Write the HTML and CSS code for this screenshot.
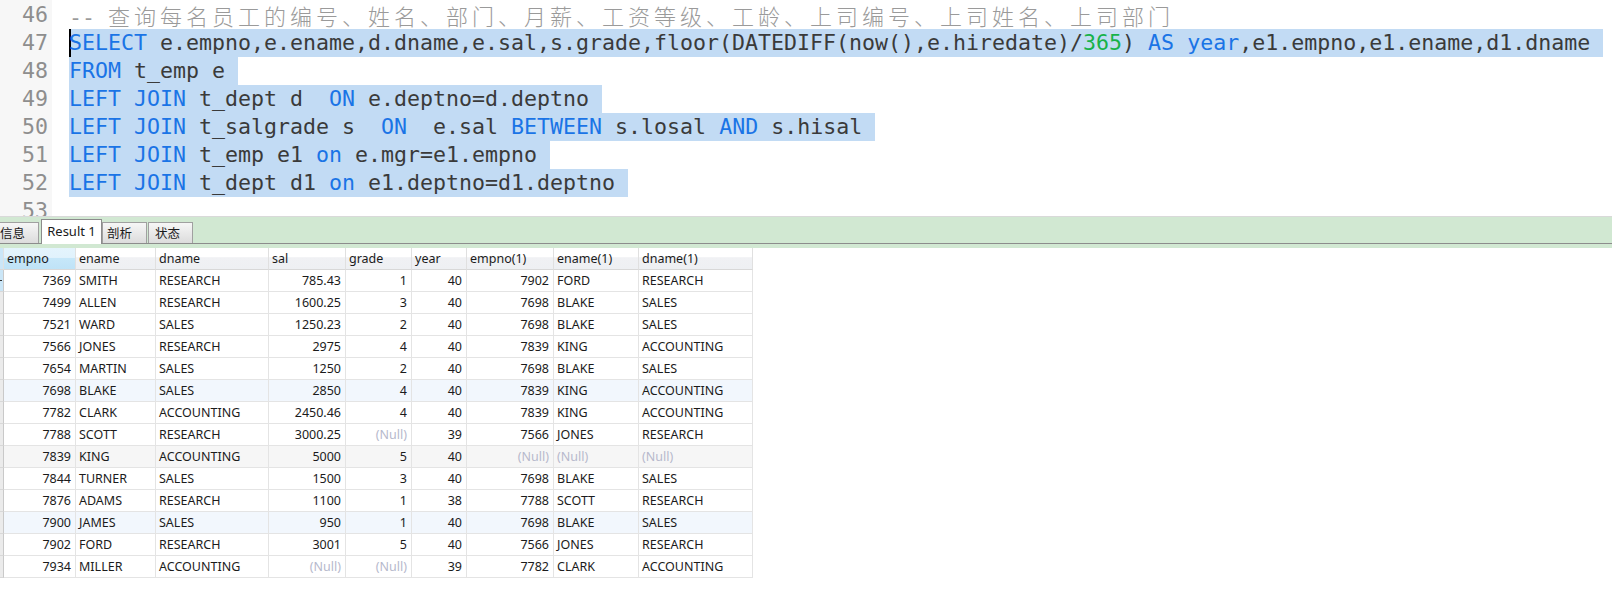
FILE: index.html
```html
<!DOCTYPE html>
<html>
<head>
<meta charset="utf-8">
<link rel="stylesheet" href="styles.css">
</head>
<body>
<div class="editor">
  <div class="gutter">
    <div class="ln">46</div>
    <div class="ln">47</div>
    <div class="ln">48</div>
    <div class="ln">49</div>
    <div class="ln">50</div>
    <div class="ln">51</div>
    <div class="ln">52</div>
    <div class="ln">53</div>
  </div>
  <div class="code">
    <div class="line"><span class="cm">-- <span class="cjk">查询每名员工的编号、姓名、部门、月薪、工资等级、工龄、上司编号、上司姓名、上司部门</span></span></div>
    <div class="line"><span class="sel caret"><span class="kw">SELECT</span> e.empno,e.ename,d.dname,e.sal,s.grade,floor(DATEDIFF(now(),e.hiredate)/<span class="num">365</span>) <span class="kw">AS</span> <span class="kw">year</span>,e1.empno,e1.ename,d1.dname </span></div>
    <div class="line"><span class="sel"><span class="kw">FROM</span> t_emp e </span></div>
    <div class="line"><span class="sel"><span class="kw">LEFT</span> <span class="kw">JOIN</span> t_dept d  <span class="kw">ON</span> e.deptno=d.deptno </span></div>
    <div class="line"><span class="sel"><span class="kw">LEFT</span> <span class="kw">JOIN</span> t_salgrade s  <span class="kw">ON</span>  e.sal <span class="kw">BETWEEN</span> s.losal <span class="kw">AND</span> s.hisal </span></div>
    <div class="line"><span class="sel"><span class="kw">LEFT</span> <span class="kw">JOIN</span> t_emp e1 <span class="kw">on</span> e.mgr=e1.empno </span></div>
    <div class="line"><span class="sel"><span class="kw">LEFT</span> <span class="kw">JOIN</span> t_dept d1 <span class="kw">on</span> e1.deptno=d1.deptno </span></div>
    <div class="line"> </div>
  </div>
</div>

<div class="tabstrip">
  <div class="tabrow">
    <div class="tab first">信息</div>
    <div class="tab active">Result 1</div>
    <div class="tab">剖析</div>
    <div class="tab last">状态</div>
  </div>
</div>

<div class="grid">
  <div class="row head">
    <div class="c ind sel-ind"></div>
    <div class="c hsel">empno</div>
    <div class="c">ename</div>
    <div class="c">dname</div>
    <div class="c">sal</div>
    <div class="c">grade</div>
    <div class="c">year</div>
    <div class="c">empno(1)</div>
    <div class="c">ename(1)</div>
    <div class="c">dname(1)</div>
  </div>
  <div class="row">
    <div class="c ind sel-ind"><span class="tip"></span></div>
    <div class="c r">7369</div><div class="c">SMITH</div><div class="c">RESEARCH</div><div class="c r">785.43</div><div class="c r">1</div><div class="c r">40</div><div class="c r">7902</div><div class="c">FORD</div><div class="c">RESEARCH</div>
  </div>
  <div class="row">
    <div class="c ind"></div>
    <div class="c r">7499</div><div class="c">ALLEN</div><div class="c">RESEARCH</div><div class="c r">1600.25</div><div class="c r">3</div><div class="c r">40</div><div class="c r">7698</div><div class="c">BLAKE</div><div class="c">SALES</div>
  </div>
  <div class="row">
    <div class="c ind"></div>
    <div class="c r">7521</div><div class="c">WARD</div><div class="c">SALES</div><div class="c r">1250.23</div><div class="c r">2</div><div class="c r">40</div><div class="c r">7698</div><div class="c">BLAKE</div><div class="c">SALES</div>
  </div>
  <div class="row">
    <div class="c ind"></div>
    <div class="c r">7566</div><div class="c">JONES</div><div class="c">RESEARCH</div><div class="c r">2975</div><div class="c r">4</div><div class="c r">40</div><div class="c r">7839</div><div class="c">KING</div><div class="c">ACCOUNTING</div>
  </div>
  <div class="row">
    <div class="c ind"></div>
    <div class="c r">7654</div><div class="c">MARTIN</div><div class="c">SALES</div><div class="c r">1250</div><div class="c r">2</div><div class="c r">40</div><div class="c r">7698</div><div class="c">BLAKE</div><div class="c">SALES</div>
  </div>
  <div class="row blue">
    <div class="c ind"></div>
    <div class="c r">7698</div><div class="c">BLAKE</div><div class="c">SALES</div><div class="c r">2850</div><div class="c r">4</div><div class="c r">40</div><div class="c r">7839</div><div class="c">KING</div><div class="c">ACCOUNTING</div>
  </div>
  <div class="row">
    <div class="c ind"></div>
    <div class="c r">7782</div><div class="c">CLARK</div><div class="c">ACCOUNTING</div><div class="c r">2450.46</div><div class="c r">4</div><div class="c r">40</div><div class="c r">7839</div><div class="c">KING</div><div class="c">ACCOUNTING</div>
  </div>
  <div class="row">
    <div class="c ind"></div>
    <div class="c r">7788</div><div class="c">SCOTT</div><div class="c">RESEARCH</div><div class="c r">3000.25</div><div class="c r null">(Null)</div><div class="c r">39</div><div class="c r">7566</div><div class="c">JONES</div><div class="c">RESEARCH</div>
  </div>
  <div class="row gray">
    <div class="c ind"></div>
    <div class="c r">7839</div><div class="c">KING</div><div class="c">ACCOUNTING</div><div class="c r">5000</div><div class="c r">5</div><div class="c r">40</div><div class="c r null">(Null)</div><div class="c null">(Null)</div><div class="c null">(Null)</div>
  </div>
  <div class="row">
    <div class="c ind"></div>
    <div class="c r">7844</div><div class="c">TURNER</div><div class="c">SALES</div><div class="c r">1500</div><div class="c r">3</div><div class="c r">40</div><div class="c r">7698</div><div class="c">BLAKE</div><div class="c">SALES</div>
  </div>
  <div class="row">
    <div class="c ind"></div>
    <div class="c r">7876</div><div class="c">ADAMS</div><div class="c">RESEARCH</div><div class="c r">1100</div><div class="c r">1</div><div class="c r">38</div><div class="c r">7788</div><div class="c">SCOTT</div><div class="c">RESEARCH</div>
  </div>
  <div class="row blue">
    <div class="c ind"></div>
    <div class="c r">7900</div><div class="c">JAMES</div><div class="c">SALES</div><div class="c r">950</div><div class="c r">1</div><div class="c r">40</div><div class="c r">7698</div><div class="c">BLAKE</div><div class="c">SALES</div>
  </div>
  <div class="row">
    <div class="c ind"></div>
    <div class="c r">7902</div><div class="c">FORD</div><div class="c">RESEARCH</div><div class="c r">3001</div><div class="c r">5</div><div class="c r">40</div><div class="c r">7566</div><div class="c">JONES</div><div class="c">RESEARCH</div>
  </div>
  <div class="row">
    <div class="c ind"></div>
    <div class="c r">7934</div><div class="c">MILLER</div><div class="c">ACCOUNTING</div><div class="c r null">(Null)</div><div class="c r null">(Null)</div><div class="c r">39</div><div class="c r">7782</div><div class="c">CLARK</div><div class="c">ACCOUNTING</div>
  </div>
</div>
</body>
</html>
```

FILE: styles.css
```css
html, body {
  margin: 0;
  padding: 0;
  background: #ffffff;
}
body {
  width: 1612px;
  height: 590px;
  overflow: hidden;
}

/* ---------- editor ---------- */
.editor {
  height: 216px;
  border-bottom: 1px solid #d9d9d9;
  overflow: hidden;
  display: flex;
}
.gutter {
  width: 52px;
  flex: none;
  background: #f7f7f7;
  padding-top: 1px;
}
.ln {
  height: 28px;
  line-height: 28px;
  text-align: right;
  padding-right: 4px;
  font-family: "DejaVu Sans Mono", monospace;
  font-size: 21.6px;
  color: #8e8e8e;
}
.code {
  flex: 1;
  padding-top: 1px;
  padding-left: 17px;
}
.line {
  height: 28px;
  line-height: 28px;
  white-space: pre;
  font-family: "DejaVu Sans Mono", monospace;
  font-size: 21.6px;
  color: #3a3a3a;
}
.sel {
  display: inline-block;
  height: 28px;
  vertical-align: top;
  background: #c2dbf4;
}
.caret {
  box-shadow: inset 2px 0 0 #000000;
}
.kw { color: #1a74e6; }
.num { color: #17b24a; }
.cm { color: #9a9a9a; }
.cjk {
  font-family: "Noto Sans CJK SC", sans-serif;
  font-size: 22px;
  font-weight: 300;
  letter-spacing: 4px;
  line-height: 28px;
}

/* ---------- tabs ---------- */
.tabstrip {
  height: 31px;
  box-sizing: border-box;
  padding-top: 2px;
  background: #d1e8d2;
}
.tabrow {
  height: 25px;
  box-sizing: border-box;
  border-bottom: 1px solid #8c8c8c;
  display: flex;
  align-items: flex-end;
}
.tab {
  height: 21px;
  width: 45px;
  box-sizing: border-box;
  border: 1px solid #a0a0a0;
  border-bottom: none;
  background: linear-gradient(#f6f6f6, #dcdcdc);
  font-family: "Noto Sans CJK SC", "Noto Sans", sans-serif;
  font-size: 12.5px;
  line-height: 19px;
  color: #1a1a1a;
  padding-left: 4px;
  white-space: nowrap;
}
.tab.first {
  margin-left: -6px;
  padding-left: 5px;
}
.tab.active {
  height: 25px;
  width: 61px;
  margin-left: 2px;
  margin-bottom: -1px;
  background: #ffffff;
  border-color: #8c8c8c;
  font-family: "Noto Sans", sans-serif;
  font-size: 13px;
  line-height: 22px;
  padding-left: 0;
  text-align: center;
}
.tab.last {
  margin-left: 1px;
  padding-left: 6px;
}

/* ---------- grid ---------- */
.grid {
  width: 753px;
  font-family: "Noto Sans", sans-serif;
  font-size: 12.5px;
  color: #1b1b1b;
}
.row {
  display: grid;
  grid-template-columns: 4px 72px 80px 113px 77px 66px 55px 87px 85px 114px;
  height: 22px;
}
.c {
  box-sizing: border-box;
  border-right: 1px solid #e4e4e4;
  border-bottom: 1px solid #e4e4e4;
  line-height: 22px;
  padding: 0 4px 0 3px;
  white-space: nowrap;
  overflow: hidden;
}
.c.r { text-align: right; }
.c.null { color: #b6b9cc; }
.c.ind {
  padding: 0;
  background: #ebebeb;
  border-right: 1px solid #c9c9c9;
  border-bottom-color: #d8d8d8;
}
.c.ind.sel-ind { background: #cbe6f7; }
.tip {
  display: block;
  width: 2px;
  height: 1px;
  margin-top: 10px;
  background: #333333;
}
.row.head .c {
  background: linear-gradient(#ffffff 0%, #ffffff 42%, #f0f1f4 46%, #eef0f3 100%);
  border-bottom-color: #d8d8d8;
  border-right-color: #e0e0e0;
}
.row.head .c.hsel {
  background: linear-gradient(#e4f4fd 0%, #e1f2fc 45%, #c6e7f9 50%, #bfe3f7 100%);
}
.row.head .c.ind { background: #cbe6f7; }
.row.blue .c { background: #f2f7fd; }
.row.gray .c { background: #f6f6f6; }
.row.blue .c.ind, .row.gray .c.ind { background: #ebebeb; }
```
